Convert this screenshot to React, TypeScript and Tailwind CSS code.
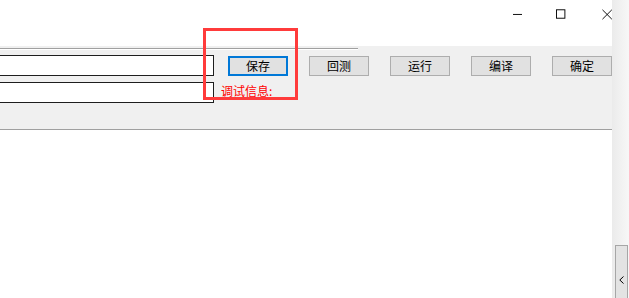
const CJK = { fontFamily: '"Noto Sans CJK SC", "Noto Sans", sans-serif' }

const BUTTONS = ['回测', '运行', '编译', '确定']

function Button({ label, focused }: { label: string; focused?: boolean }) {
    return (
        <button
            type="button"
            className={`w-[60px] h-[20px] flex items-center justify-center bg-[#e1e1e1] text-[12px] leading-none text-black ${focused ? 'border-2 border-[#0078d7]' : 'border border-[#adadad]'}`}
            style={CJK}
        >
            {label}
        </button>
    )
}

export default function App() {
    return (
        <div className="relative w-[629px] h-[298px] overflow-hidden flex bg-white" style={CJK}>
            {/* main window column */}
            <div className="w-[612px] h-full flex flex-col">
                {/* title bar */}
                <div className="h-[46px] bg-white flex items-start pl-[513px] pt-[8px]">
                    <svg width="10" height="10" viewBox="0 0 10 10" className="mt-[1px]">
                        <line x1="0" y1="5.5" x2="10" y2="5.5" stroke="#000" strokeWidth="1" />
                    </svg>
                    <svg width="10" height="10" viewBox="0 0 10 10" className="ml-[34px] mt-[1px]">
                        <rect x="0.5" y="0.5" width="9" height="9" fill="none" stroke="#000" strokeWidth="1" />
                    </svg>
                    <svg width="11" height="11" viewBox="0 0 11 11" className="ml-[36px] mt-[1px]">
                        <line x1="0.5" y1="0.5" x2="10.5" y2="10.5" stroke="#000" strokeWidth="1" />
                        <line x1="10.5" y1="0.5" x2="0.5" y2="10.5" stroke="#000" strokeWidth="1" />
                    </svg>
                </div>

                {/* gray control panel */}
                <div className="h-[84px] bg-[#f0f0f0] border-b border-[#a0a0a0] flex flex-col">
                    <div className="mt-[2px] w-[358px] h-[2px] border-t border-[#a0a0a0] bg-white" />
                    <div className="mt-[5px] flex items-start">
                        <div className="w-[214px] h-[21px] bg-white border border-l-0 border-[#1e1e1e]" />
                        <div className="ml-[14px] mt-[1px] flex gap-[21px]">
                            <Button label="保存" focused />
                            {BUTTONS.map(b => <Button key={b} label={b} />)}
                        </div>
                    </div>
                    <div className="mt-[6px] flex items-start">
                        <div className="w-[214px] h-[21px] bg-white border border-l-0 border-[#1e1e1e]" />
                        <span className="ml-[7px] mt-[1px] text-[12px] leading-[16px] text-[#ff0000]">调试信息:</span>
                    </div>
                </div>

                {/* content */}
                <div className="flex-1 bg-white" />
            </div>

            {/* right edge strip with scrollbar button */}
            <div className="w-[17px] h-full bg-gradient-to-r from-[#ebebeb] to-[#f7f7f7] flex flex-col">
                <div className="mt-[245px] ml-[3px] w-[13px] flex-1 border border-b-0 border-[#a6a6a6] bg-[#e3e3e3] flex justify-center pt-[30px]">
                    <svg width="5" height="8" viewBox="0 0 5 8">
                        <polyline points="4.5,0.5 0.8,4 4.5,7.5" fill="none" stroke="#000" strokeWidth="1" />
                    </svg>
                </div>
            </div>

            {/* red annotation box */}
            <div className="absolute left-[203px] top-[28px] w-[95px] h-[72px] border-[3px] border-[#ff3b3b]" />
        </div>
    )
}
